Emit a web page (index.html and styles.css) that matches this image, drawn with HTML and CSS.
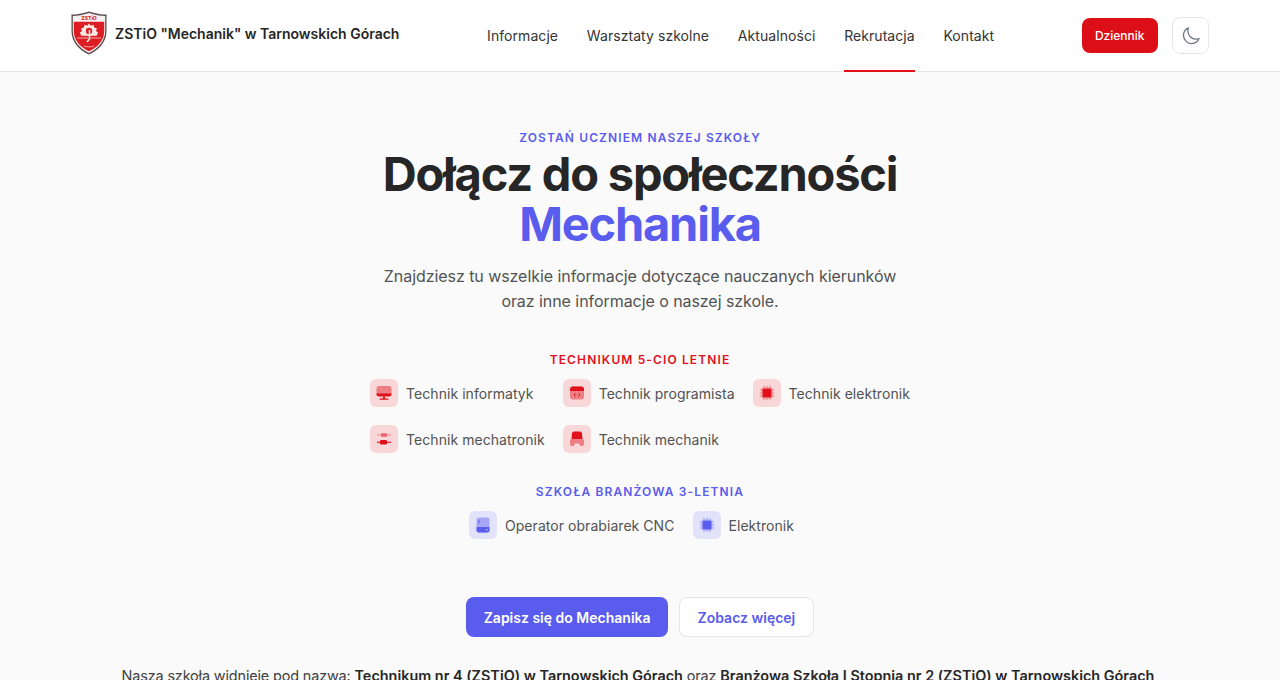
FILE: index.html
```html
<!DOCTYPE html>
<html lang="pl">
<head>
<meta charset="utf-8">
<title>ZSTiO "Mechanik" w Tarnowskich Górach</title>
<link rel="stylesheet" href="styles.css">
</head>
<body>

<header class="topbar">
	<a class="brand" href="#">
		<svg class="brand-logo" viewBox="0 0 36 44" width="36" height="44">
			<path d="M18 .5C24 2.600 30 3.600 35.500 3.600V20C35.500 31 28 39 18 43.500 8 39 .5 31 .5 20V3.600C6 3.600 12 2.600 18 .5Z" fill="#5a4a48"/>
			<path d="M18 2C24 4 29.500 5 34.200 5.100V20C34.200 30 27 37.800 18 41.900 9 37.800 1.800 30 1.800 20V5.100C6.500 5 12 4 18 2Z" fill="#f6f2f0"/>
			<path d="M2.800 10.800H33.200V20C33.200 29.500 26.500 36.500 18 40.300 9.500 36.500 2.800 29.500 2.800 20Z" fill="#dd1c24"/>
			<text class="brand-logo-text" x="18" y="9.200" text-anchor="middle">ZSTiO</text>
			<path d="M18 12.500l1.800 2.200 2.700-.9.700 2.700 2.700.7-.9 2.700 2.200 1.800-1.600 3H10.400l-1.600-3 2.200-1.800-.9-2.700 2.700-.7.700-2.700 2.700.9Z" fill="#f9e8e4"/>
			<circle cx="18" cy="20" r="3.200" fill="#dd1c24"/>
			<path d="M18.500 19v9l-2.500 3" stroke="#f9e8e4" stroke-width="1.600" fill="none"/>
			<path d="M6 27H30" stroke="#f3a9a5" stroke-width="1"/>
			<path d="M13 35c3 1.200 7 1.200 10 0" stroke="#f3a9a5" stroke-width="1" fill="none"/>
		</svg>
		<span class="brand-name">ZSTiO "Mechanik" w Tarnowskich Górach</span>
	</a>

	<nav class="mainnav">
		<a href="#">Informacje</a>
		<a href="#">Warsztaty szkolne</a>
		<a href="#">Aktualności</a>
		<a class="active" href="#">Rekrutacja</a>
		<a href="#">Kontakt</a>
	</nav>

	<div class="actions">
		<a class="btn-journal" href="#">Dziennik</a>
		<button class="btn-theme" aria-label="Tryb ciemny">
			<svg viewBox="0 0 24 24" width="20" height="20" fill="none" stroke="#6b7280" stroke-width="1.500" stroke-linecap="round" stroke-linejoin="round">
				<path d="M21.750 15A9.720 9.720 0 0 1 18 15.750 9.750 9.750 0 0 1 8.250 6c0-1.330.266-2.597.748-3.752A9.753 9.753 0 0 0 3 11.250 9.750 9.750 0 0 0 12.750 21a9.753 9.753 0 0 0 9-6Z"/>
			</svg>
		</button>
	</div>
</header>

<main class="hero">
	<p class="eyebrow">Zostań uczniem naszej szkoły</p>
	<h1>Dołącz do społeczności <span>Mechanika</span></h1>
	<p class="lead">Znajdziesz tu wszelkie informacje dotyczące nauczanych kierunków<br>oraz inne informacje o naszej szkole.</p>

	<h2 class="group-title red">Technikum 5-cio letnie</h2>
	<ul class="courses red">
		<li>
			<span class="course-icon">
				<svg viewBox="0 0 16 16" width="16" height="16">
					<rect x=".5" y="1" width="15" height="10" rx="2.500" class="soft"/>
					<path d="M.5 8.500h15V9a2.500 2.500 0 0 1-2.500 2.500H3A2.500 2.500 0 0 1 .5 9Z"/>
					<path d="M7 11.500h2V14H7Z"/>
					<rect x="3.500" y="13.500" width="9" height="1.300" rx=".6"/>
				</svg>
			</span>
			Technik informatyk
		</li>
		<li>
			<span class="course-icon">
				<svg viewBox="0 0 16 16" width="16" height="16">
					<rect x="1" y="1.500" width="14" height="13" rx="3" class="soft"/>
					<path d="M4 1.500h8a3 3 0 0 1 3 3V6H1V4.500a3 3 0 0 1 3-3Z"/>
					<path d="M6.500 8.500 5 10l1.500 1.500M9.500 8.500 11 10l-1.500 1.500" fill="none" stroke="#e0111b" stroke-width="1"/>
				</svg>
			</span>
			Technik programista
		</li>
		<li>
			<span class="course-icon">
				<svg viewBox="0 0 16 16" width="16" height="16">
					<rect x="2.500" y="2.500" width="11" height="11" rx="2" class="soft"/>
					<path d="M5 .8v1.700M8 .8v1.700M11 .8v1.700M5 13.500v1.700M8 13.500v1.700M11 13.500v1.700M.8 5h1.700M.8 8h1.700M.8 11h1.700M13.500 5h1.700M13.500 8h1.700M13.500 11h1.700" stroke="#e0111b" stroke-width=".9" opacity=".55"/>
					<rect x="3.700" y="3.700" width="8.600" height="8.600" rx="1.500"/>
				</svg>
			</span>
			Technik elektronik
		</li>
		<li>
			<span class="course-icon">
				<svg viewBox="0 0 16 16" width="16" height="16">
					<rect x="5" y="2" width="6" height="4" rx="1" class="soft"/>
					<rect x="1" y="3.500" width="14" height="1" class="soft"/>
					<rect x="4" y="9" width="7" height="4.500" rx="1.200"/>
					<rect x="1" y="10.700" width="14" height="1.100"/>
				</svg>
			</span>
			Technik mechatronik
		</li>
		<li>
			<span class="course-icon">
				<svg viewBox="0 0 16 16" width="16" height="16">
					<path d="M5 .5h6a2 2 0 0 1 2 1.800L13.500 8h-11L3 2.300A2 2 0 0 1 5 .5Z"/>
					<path d="M2.500 8h11A1.500 1.500 0 0 1 15 9.500V13a2 2 0 0 1-2 2h-1.700L10 12.500H6L4.700 15H3a2 2 0 0 1-2-2V9.500A1.500 1.500 0 0 1 2.500 8Z" class="soft"/>
				</svg>
			</span>
			Technik mechanik
		</li>
	</ul>

	<h2 class="group-title blue">Szkoła branżowa 3-letnia</h2>
	<ul class="courses-row blue">
		<li>
			<span class="course-icon">
				<svg viewBox="0 0 16 16" width="16" height="16">
					<rect x="1.500" y=".5" width="13" height="15" rx="2.500" class="soft"/>
					<path d="M1.500 10h13v3a2.500 2.500 0 0 1-2.500 2.500H4A2.500 2.500 0 0 1 1.500 13Z"/>
					<rect x="3.500" y="3" width="1" height="3.500" rx=".5"/>
					<circle cx="11.800" cy="12.800" r=".8" fill="#e2e3fb"/>
				</svg>
			</span>
			Operator obrabiarek CNC
		</li>
		<li>
			<span class="course-icon">
				<svg viewBox="0 0 16 16" width="16" height="16">
					<rect x="2.500" y="2.500" width="11" height="11" rx="2" class="soft"/>
					<path d="M5 .8v1.700M8 .8v1.700M11 .8v1.700M5 13.500v1.700M8 13.500v1.700M11 13.500v1.700M.8 5h1.700M.8 8h1.700M.8 11h1.700M13.500 5h1.700M13.500 8h1.700M13.500 11h1.700" stroke="#5a5ced" stroke-width=".9" opacity=".55"/>
					<rect x="3.700" y="3.700" width="8.600" height="8.600" rx="1.500"/>
				</svg>
			</span>
			Elektronik
		</li>
	</ul>

	<div class="cta">
		<a class="btn-primary" href="#">Zapisz się do Mechanika</a>
		<a class="btn-outline" href="#">Zobacz więcej</a>
	</div>

	<p class="names">Nasza szkoła widnieje pod nazwą: <strong>Technikum nr 4 (ZSTiO) w Tarnowskich Górach</strong> oraz <strong>Branżowa Szkoła I Stopnia nr 2 (ZSTiO) w Tarnowskich Górach</strong></p>
</main>

</body>
</html>
```

FILE: styles.css
```css
* {
	box-sizing: border-box;
}

html, body {
	height: 680px;
	overflow: hidden;
}

body {
	margin: 0;
	background: #fafafa;
	color: #262626;
	font-family: Inter, "Liberation Sans", sans-serif;
}

a {
	text-decoration: none;
	color: inherit;
}

ul {
	list-style: none;
	margin: 0;
	padding: 0;
}

/* top bar */
.topbar {
	display: flex;
	justify-content: space-between;
	align-items: stretch;
	height: 72px;
	padding: 0 71px;
	background: #fff;
	border-bottom: 1px solid #e5e5e5;
}

.brand {
	display: flex;
	align-items: center;
	gap: 8px;
	margin-top: -5px;
}

.brand-logo-text {
	font-family: Inter, sans-serif;
	font-size: 5px;
	font-weight: 800;
	fill: #dd1c24;
}

.brand-name {
	font-size: 14px;
	font-weight: 600;
	color: #262626;
}

.mainnav {
	display: flex;
	gap: 28.750px;
}

.mainnav a {
	display: flex;
	align-items: center;
	font-size: 14px;
	font-weight: 400;
	letter-spacing: .06px;
	color: #333;
	padding-top: 1px;
	margin-bottom: -1px;
	border-bottom: 2px solid transparent;
}

.mainnav a.active {
	border-bottom-color: #e0111b;
}

.actions {
	display: flex;
	align-items: center;
	gap: 14.500px;
}

.btn-journal {
	display: flex;
	align-items: center;
	height: 35px;
	padding: 0 13px;
	border-radius: 8px;
	background: #dc0f18;
	color: #fff;
	font-size: 12px;
	font-weight: 500;
}

.btn-theme {
	display: flex;
	align-items: center;
	justify-content: center;
	width: 37px;
	height: 37px;
	padding: 0;
	border: 1px solid #e5e7eb;
	border-radius: 8px;
	background: #fff;
}

/* hero */
.hero {
	display: flex;
	flex-direction: column;
	align-items: center;
	padding-top: 59px;
	text-align: center;
}

.eyebrow {
	margin: 0;
	font-size: 12px;
	line-height: 14px;
	font-weight: 600;
	letter-spacing: 1.120px;
	text-transform: uppercase;
	color: #5a5ced;
}

h1 {
	margin: 4px 0 0;
	width: 600px;
	font-size: 47px;
	line-height: 50px;
	font-weight: 700;
	letter-spacing: -1.200px;
	color: #262626;
}

h1 span {
	display: block;
	color: #5a5ced;
}

.lead {
	margin: 15px 0 0;
	font-size: 16px;
	line-height: 25px;
	letter-spacing: -.06px;
	color: #525252;
}

.group-title {
	margin: 0;
	font-size: 12px;
	line-height: 14px;
	font-weight: 600;
	letter-spacing: 1.120px;
	text-transform: uppercase;
}

.group-title.red {
	margin-top: 39px;
	color: #e0111b;
}

.group-title.blue {
	margin-top: 32px;
	color: #5a5ced;
}

.courses {
	display: grid;
	grid-template-columns: repeat(3, auto);
	gap: 18px;
	margin-top: 12px;
}

.courses-row {
	display: flex;
	gap: 18px;
	margin-top: 12px;
	margin-right: 17px;
}

.courses li, .courses-row li {
	display: flex;
	align-items: flex-start;
	gap: 8px;
	height: 28px;
	font-size: 14px;
	line-height: 30px;
	letter-spacing: .05px;
	color: #525252;
}

.course-icon {
	display: flex;
	align-items: center;
	justify-content: center;
	width: 28px;
	height: 28px;
	border-radius: 6px;
}

.red .course-icon {
	background: #f8d7d9;
	fill: #e0111b;
}

.blue .course-icon {
	background: #e2e3fb;
	fill: #5a5ced;
}

.course-icon .soft {
	opacity: .45;
}

/* buttons */
.cta {
	display: flex;
	gap: 11px;
	margin-top: 58px;
}

.btn-primary, .btn-outline {
	display: flex;
	align-items: center;
	height: 40px;
	border-radius: 8px;
	font-size: 14px;
	font-weight: 600;
}

.btn-primary {
	padding: 0 17.500px;
	background: #5a5ced;
	color: #fff;
}

.btn-outline {
	padding: 0 17.500px;
	background: #fff;
	border: 1px solid #e5e5e5;
	color: #5a5ced;
}

.names {
	margin: 29px 4px 0 0;
	font-size: 14.400px;
	line-height: 20px;
	letter-spacing: -.13px;
	color: #404040;
	white-space: nowrap;
}

.names strong {
	font-weight: 600;
	letter-spacing: .01px;
	color: #262626;
}
```
